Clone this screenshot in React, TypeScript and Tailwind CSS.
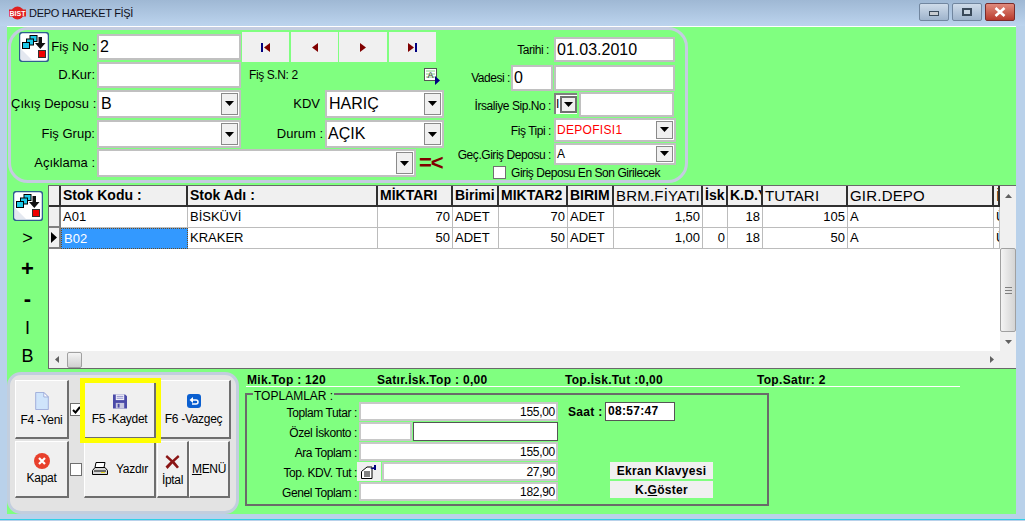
import type { ReactNode } from 'react';

// Delphi style "DEPO HAREKET FİŞİ" window

const Arrow = () => (
  <svg width="9" height="5" viewBox="0 0 9 5"><path d="M0 0h9L4.5 5z" fill="#000" /></svg>
);

const Field = ({ className = '', children }: { className?: string; children?: ReactNode }) => (
  <div className={`flex items-center overflow-hidden whitespace-nowrap bg-white border-2 border-[#c0c0c0] ${className}`}>
    {children}
  </div>
);

const Combo = ({ className = '', text, textClass = '' }: { className?: string; text?: string; textClass?: string }) => (
  <div className={`flex items-stretch bg-white border-2 border-[#c0c0c0] ${className}`}>
    <span className={`flex-1 overflow-hidden whitespace-nowrap self-center ${textClass}`}>{text}</span>
    <span className="m-[1px] w-[17px] flex items-center justify-center bg-[#f0f0f0] border border-[#8a8a8a]">
      <Arrow />
    </span>
  </div>
);

const LinkIcon = () => (
  <svg width="30" height="30" viewBox="0 0 30 30" className="shrink-0">
    <rect x="0.5" y="0.5" width="29" height="29" rx="3" fill="#fff" stroke="#2f5f8f" strokeWidth="1.5" />
    <path d="M2 28 L2 17 L13 28z" fill="#e4e8f0" />
    <rect x="11" y="3.5" width="7" height="6" fill="#1ec8e8" stroke="#000" />
    <rect x="7.5" y="7" width="7" height="6" fill="#1ec8e8" stroke="#000" />
    <rect x="3.5" y="10.5" width="7" height="6" fill="#1ec8e8" stroke="#000" />
    <path d="M19.5 5h3.5v6h3.5l-5.2 6-5.3-6h3.5z" fill="#111" />
    <rect x="19.5" y="18.5" width="7" height="7" fill="#f00000" stroke="#333" />
  </svg>
);

const NavBtn = ({ children, className = '' }: { children: ReactNode; className?: string }) => (
  <div className={`h-[30px] flex items-center justify-center bg-[#f0f0f0] ${className}`}>{children}</div>
);

const headers = [
  { t: 'Stok Kodu :', w: 'w-[127px]', b: true },
  { t: 'Stok Adı :', w: 'w-[190px]', b: true },
  { t: 'MİKTARI', w: 'w-[75px]', b: true },
  { t: 'Birimi', w: 'w-[46px]', b: true },
  { t: 'MIKTAR2', w: 'w-[69px]', b: true },
  { t: 'BIRIM', w: 'w-[46px]', b: true },
  { t: 'BRM.FİYATI', w: 'w-[89px]', b: false },
  { t: 'İsk', w: 'w-[25px]', b: true },
  { t: 'K.D.Y', w: 'w-[35px]', b: true },
  { t: 'TUTARI', w: 'w-[85px]', b: false },
  { t: 'GIR.DEPO', w: 'w-[146px]', b: false },
  { t: 'İ', w: 'w-[6px]', b: false },
];

const rows = [
  ['A01', 'BİSKÜVİ', '70', 'ADET', '70', 'ADET', '1,50', '', '18', '105', 'A', 'Ü'],
  ['B02', 'KRAKER', '50', 'ADET', '50', 'ADET', '1,00', '0', '18', '50', 'A', 'Ü'],
];

const rightCols = [2, 4, 6, 7, 8, 9];

const ActionBtn = ({ children, className = '' }: { children: ReactNode; className?: string }) => (
  <div className={`h-full bg-[#f0f0f0] border-t border-l border-t-white border-l-white border-r-2 border-b-2 border-r-[#6e6e6e] border-b-[#6e6e6e] flex flex-col items-center justify-center text-[12px] tracking-[-0.3px] text-black whitespace-nowrap ${className}`}>
    {children}
  </div>
);

const TotalRow = ({ label, children }: { label: string; children: ReactNode }) => (
  <div className="flex items-center h-[19px]">
    <span className="w-[112px] text-right text-[12px] tracking-[-0.4px] pr-[2px] pt-[2px] whitespace-nowrap">{label}</span>
    {children}
  </div>
);

const Amount = ({ v, className = '' }: { v: string; className?: string }) => (
  <Field className={`h-[19px] justify-end pr-[1px] text-[12px] tracking-[-0.3px] border-[#c8c8c8] ${className}`}>{v}</Field>
);

export default function App() {
  return (
    <div className="w-[1025px] h-[521px] overflow-hidden flex flex-col bg-[#b9d1ea] text-black font-['Liberation_Sans',Arial,sans-serif]">
      {/* title bar */}
      <div className="h-[26px] shrink-0 flex items-center pl-[9px] bg-gradient-to-b from-[#9fb8d4] to-[#bcd4ee]">
        <svg width="17" height="14" viewBox="0 0 17 14" className="mr-[3px]">
          <ellipse cx="8.5" cy="7" rx="6.5" ry="6.5" fill="#e02020" />
          <rect x="0" y="3.5" width="17" height="7" fill="#e02020" />
          <text x="8.5" y="9.5" textAnchor="middle" fontSize="7" fontWeight="700" fill="#fff" fontFamily="Liberation Sans">BIST</text>
        </svg>
        <span className="text-[11px] tracking-[-0.3px] text-[#101020]">DEPO HAREKET FİŞİ</span>
        <div className="ml-auto mr-[10px] flex gap-[3px] -mt-[2px]">
          <div className="w-[30px] h-[18px] rounded-[2px] border border-[#71869f] bg-gradient-to-b from-[#cfdcea] to-[#9fb4cc] flex items-center justify-center">
            <div className="w-[10px] h-[5px] mt-[3px] bg-[#c8ccd0] border border-[#3a4a5a]" />
          </div>
          <div className="w-[30px] h-[18px] rounded-[2px] border border-[#71869f] bg-gradient-to-b from-[#cfdcea] to-[#9fb4cc] flex items-center justify-center">
            <div className="w-[10px] h-[8px] border-2 border-[#3a4a5a] bg-[#c8d4e0]" />
          </div>
          <div className="w-[30px] h-[18px] rounded-[2px] border border-[#7a2c2c] bg-gradient-to-b from-[#e08a7c] to-[#b8382c] flex items-center justify-center">
            <svg width="12" height="10" viewBox="0 0 12 10"><path d="M1.5 1l9 8M10.5 1l-9 8" stroke="#fff" strokeWidth="2.6" /></svg>
          </div>
        </div>
      </div>

      <div className="ml-[7px] w-[1009px] h-[488px] shrink-0 bg-[#80ff80] border-t border-t-white flex flex-col">
        {/* header panel */}
        <div className="h-[158px] shrink-0 pl-[1px]">
          <div className="w-[680px] h-[156px] border-[3px] border-[#c4cce0] rounded-[20px] flex">
            {/* left block */}
            <div className="w-[439px] shrink-0 pt-[2px] text-[13px]">
              <div className="h-[30px] flex items-center">
                <div className="ml-[8px]"><LinkIcon /></div>
                <span className="w-[48px] text-right pr-[1px] whitespace-nowrap">Fiş No :</span>
                <Field className="w-[144px] h-[26px] pl-[1px] text-[16px]">2</Field>
                <div className="flex ml-[1px]">
                  <NavBtn className="w-[47px] mr-[2px]">
                    <svg width="9" height="9" viewBox="0 0 9 9"><rect width="2" height="9" fill="#000080" /><path d="M9 0v9L3 4.5z" fill="#800000" /></svg>
                  </NavBtn>
                  <NavBtn className="w-[47px] mr-[1px]">
                    <svg width="6" height="9" viewBox="0 0 6 9"><path d="M6 0v9L0 4.5z" fill="#800000" /></svg>
                  </NavBtn>
                  <NavBtn className="w-[48px] mr-[2px]">
                    <svg width="6" height="9" viewBox="0 0 6 9"><path d="M0 0v9l6-4.5z" fill="#800000" /></svg>
                  </NavBtn>
                  <NavBtn className="w-[47px]">
                    <svg width="9" height="9" viewBox="0 0 9 9"><path d="M0 0v9l6-4.5z" fill="#800000" /><rect x="7" width="2" height="9" fill="#000080" /></svg>
                  </NavBtn>
                </div>
              </div>
              <div className="h-[26px] flex items-center">
                <span className="w-[86px] text-right pr-[2px] whitespace-nowrap">D.Kur:</span>
                <Field className="w-[144px] h-[26px]" />
                <span className="ml-[8px] text-[12px] tracking-[-0.4px] whitespace-nowrap">Fiş S.N: 2</span>
                <svg width="16" height="17" viewBox="0 0 16 17" className="ml-[126px] mt-[2px]">
                  <rect x="0.5" y="0.5" width="12" height="12" fill="#fff" stroke="#555" />
                  <path d="M2 3h9M2 6h9M2 9h9" stroke="#7fd07f" />
                  <text x="6.5" y="10" textAnchor="middle" fontSize="9" fill="#333" fontFamily="Liberation Sans">A</text>
                  <path d="M11 8l5 4.5-5 4.5z" fill="#000080" />
                </svg>
              </div>
              <div className="h-[29px] mt-[1px] flex items-center">
                <span className="w-[86px] text-right pr-[1px] whitespace-nowrap">Çıkış Deposu :</span>
                <Combo className="w-[144px] h-[28px]" text="B" textClass="pl-[2px] text-[16px]" />
                <span className="w-[84px] text-right pr-[5px]">KDV</span>
                <Combo className="w-[119px] h-[28px]" text="HARIÇ" textClass="pl-[2px] text-[16px]" />
              </div>
              <div className="h-[28px] mt-[2px] flex items-center">
                <span className="w-[86px] text-right pr-[2px] whitespace-nowrap">Fiş Grup:</span>
                <Combo className="w-[144px] h-[28px]" />
                <span className="w-[84px] text-right pr-[2px]">Durum :</span>
                <Combo className="w-[119px] h-[28px]" text="AÇIK" textClass="pl-[1px] text-[16px]" />
              </div>
              <div className="h-[28px] mt-[1px] flex items-center">
                <span className="w-[86px] text-right pr-[2px] whitespace-nowrap">Açıklama :</span>
                <Combo className="w-[319px] h-[28px]" />
                <span className="ml-[3px] text-[22px] leading-[22px] font-bold text-[#800000] tracking-[-1px]">=&lt;</span>
              </div>
            </div>

            {/* right block */}
            <div className="pt-[7px] text-[12px] tracking-[-0.45px]">
              <div className="h-[25px] flex items-center">
                <span className="w-[104px] text-right pr-[5px] whitespace-nowrap">Tarihi :</span>
                <Field className="w-[121px] h-[25px] pl-[1px] text-[16px] tracking-normal">01.03.2010</Field>
              </div>
              <div className="h-[26px] mt-[3px] flex items-center">
                <span className="w-[61px] text-right pr-[1px] whitespace-nowrap">Vadesi :</span>
                <Field className="w-[42px] h-[26px] pl-[1px] text-[16px] tracking-normal">0</Field>
                <Field className="ml-[1px] w-[121px] h-[26px]" />
              </div>
              <div className="h-[25px] mt-[1px] flex items-start">
                <span className="w-[104px] h-[25px] flex items-center justify-end pr-[3px] pt-[3px] whitespace-nowrap">İrsaliye Sip.No :</span>
                <div className="w-[23px] h-[21px] mt-[1px] bg-white flex items-center justify-between overflow-hidden border-t-2 border-l-2 border-[#808080]">
                  <span className="text-[12px] leading-[17px] w-[4px] overflow-hidden">I</span>
                  <span className="w-[17px] h-[17px] flex items-center justify-center bg-[#f0f0f0] border-2 border-[#707070]">
                    <Arrow />
                  </span>
                </div>
                <Field className="ml-[2px] w-[95px] h-[25px]" />
              </div>
              <div className="h-[23px] mt-[1px] flex items-center">
                <span className="w-[104px] text-right pr-[3px] pt-[2px] whitespace-nowrap">Fiş Tipi :</span>
                <Combo className="w-[122px] h-[24px]" text="DEPOFISI1" textClass="pl-[1px] text-[12px] tracking-[0.3px] text-[#ff0000]" />
              </div>
              <div className="h-[21px] mt-[2px] flex items-center">
                <span className="w-[104px] text-right pr-[3px] pt-[2px] whitespace-nowrap">Geç.Giriş Deposu :</span>
                <Combo className="w-[122px] h-[22px]" text="A" textClass="pl-[1px] text-[12px] tracking-normal" />
              </div>
              <div className="h-[13px] mt-[2px] flex items-center pl-[43px]">
                <span className="w-[13px] h-[13px] bg-white border border-[#707070]" />
                <span className="ml-[5px] whitespace-nowrap">Giriş Deposu En Son Girilecek</span>
              </div>
            </div>
          </div>
        </div>

        {/* grid row */}
        <div className="h-[184px] shrink-0 flex">
          <div className="w-[41px] shrink-0 flex flex-col items-center">
            <div className="mt-[6px] mb-[3px]"><LinkIcon /></div>
            <span className="h-[30px] flex items-center text-[18px]">&gt;</span>
            <span className="h-[30px] flex items-center text-[22px] font-bold">+</span>
            <span className="h-[30px] flex items-center text-[22px] font-bold">-</span>
            <span className="h-[30px] flex items-center text-[18px]">I</span>
            <span className="h-[26px] flex items-center text-[18px]">B</span>
          </div>
          <div className="w-[968px] h-[184px] flex border-t border-l border-b border-[#696969] bg-white">
            <div className="w-[951px] flex flex-col">
              <div className="h-[21px] flex bg-[#f0f0f0] border-b-2 border-[#303030]">
                <div className="w-[12px] border-r-2 border-[#303030]" />
                {headers.map((h) => (
                  <div key={h.t} className={`${h.w} ${h.b ? 'text-[14px] font-bold' : 'text-[15px] tracking-[0.2px]'} pl-[2px] border-r-2 border-[#303030] overflow-hidden whitespace-nowrap leading-[19px]`}>
                    {h.t}
                  </div>
                ))}
              </div>
              {rows.map((row, r) => (
                <div key={row[0]} className="h-[21px] flex text-[13px]">
                  <div className="w-[12px] bg-[#f0f0f0] border-r-2 border-b-2 border-[#808080] flex items-center justify-center">
                    {r === 1 && <svg width="6" height="11" viewBox="0 0 6 11"><path d="M0 0v11l6-5.5z" fill="#000" /></svg>}
                  </div>
                  {row.map((cell, c) => (
                    <div
                      key={c}
                      className={`${headers[c].w} px-[2px] flex items-center overflow-hidden whitespace-nowrap ${
                        rightCols.includes(c) ? 'justify-end' : ''
                      } ${
                        r === 1 && c === 0
                          ? 'bg-[#3399ff] text-white border border-dotted border-[#6a4a20]'
                          : 'border-r border-b border-[#bcbcbc]'
                      }`}
                    >
                      {cell}
                    </div>
                  ))}
                </div>
              ))}
              <div className="flex-1" />
              {/* horizontal scrollbar */}
              <div className="h-[17px] shrink-0 flex items-center bg-[#f0f0f0]">
                <svg width="4" height="7" viewBox="0 0 4 7" className="ml-[6px]"><path d="M4 0v7L0 3.5z" fill="#606060" /></svg>
                <div className="ml-[8px] w-[15px] h-[16px] rounded-[2px] border border-[#a0a0a0] bg-gradient-to-b from-[#f4f4f4] to-[#d0d0d0]" />
                <svg width="4" height="7" viewBox="0 0 4 7" className="ml-auto mr-[6px]"><path d="M0 0v7l4-3.5z" fill="#606060" /></svg>
              </div>
            </div>
            {/* vertical scrollbar */}
            <div className="w-[16px] flex flex-col bg-[#f0f0f0]">
              <div className="h-[20px] flex items-center justify-center">
                <svg width="7" height="4" viewBox="0 0 7 4"><path d="M0 4h7L3.5 0z" fill="#606060" /></svg>
              </div>
              <div className="h-[42px]" />
              <div className="h-[84px] rounded-[2px] border border-[#a0a0a0] bg-gradient-to-r from-[#f4f4f4] to-[#d4d4d4] flex items-center justify-center">
                <div className="w-[7px] h-[7px] border-t border-b border-[#808080] flex items-center"><div className="w-full h-px bg-[#808080]" /></div>
              </div>
              <div className="h-[20px] flex items-center justify-center">
                <svg width="7" height="4" viewBox="0 0 7 4"><path d="M0 0h7L3.5 4z" fill="#606060" /></svg>
              </div>
            </div>
          </div>
        </div>

        {/* bottom */}
        <div className="flex-1 flex">
          <div className="w-[232px] h-[142px] mt-[3px] shrink-0 rounded-[14px] border-[3px] border-[#c2cede] bg-[#e3e3e3] pl-[5px] pt-[5px]">
            <div className="h-[59px] flex items-center">
              <ActionBtn className="w-[54px] pt-[3px]">
                <svg width="14" height="18" viewBox="0 0 15 20" className="mb-[1px]">
                  <path d="M.5.5h9l5 5v14H.5z" fill="#cfe4fb" stroke="#9aa8d8" />
                  <path d="M9.5.5v5h5z" fill="#fff" stroke="#9aa8d8" />
                </svg>
                F4 -Yeni
              </ActionBtn>
              <div className="w-[15px] flex pl-[1px]">
                <span className="w-[12px] h-[13px] bg-white border border-[#707070] flex items-center justify-center">
                  <svg width="9" height="8" viewBox="0 0 9 8"><path d="M1 4l2.5 2.5L8 1" fill="none" stroke="#000" strokeWidth="2" /></svg>
                </span>
              </div>
              <div className="relative w-[72px] h-full">
                <ActionBtn className="w-full pt-[3px]">
                  <svg width="14" height="15" viewBox="0 0 15 15" className="mb-[1px]">
                    <path d="M0 0h13l2 2v13H0z" fill="#4a4aa8" />
                    <rect x="3" y="0" width="9" height="6" fill="#f2f2fa" />
                    <path d="M4 2h7M4 4h7" stroke="#8a8ac8" />
                    <rect x="3" y="9" width="9" height="6" fill="#c8c8e0" />
                    <rect x="5" y="10" width="2" height="4" fill="#4a4aa8" />
                  </svg>
                  F5 -Kaydet
                </ActionBtn>
                <div className="absolute left-[-4px] top-[-2px] w-[81px] h-[65px] border-[5px] border-[#ffff00]" />
              </div>
              <ActionBtn className="ml-[1px] w-[74px] pt-[3px]">
                <svg width="14" height="14" viewBox="0 0 14 14" className="mb-[2px]">
                  <rect width="14" height="14" rx="3" fill="#0a5fd0" />
                  <path d="M4 6h5a2 2 0 0 1 0 4H5" fill="none" stroke="#fff" strokeWidth="1.5" />
                  <path d="M6 3v6L2.5 6z" fill="#fff" />
                </svg>
                F6 -Vazgeç
              </ActionBtn>
            </div>
            <div className="h-[57px] mt-[2px] flex items-center">
              <ActionBtn className="w-[54px] pt-[2px]">
                <svg width="16" height="16" viewBox="0 0 16 16">
                  <circle cx="8" cy="8" r="8" fill="#e8402c" />
                  <path d="M5 5l6 6M11 5l-6 6" stroke="#fff" strokeWidth="2.2" />
                </svg>
                Kapat
              </ActionBtn>
              <div className="w-[15px] flex pl-[1px]">
                <span className="w-[12px] h-[13px] bg-white border border-[#707070]" />
              </div>
              <ActionBtn className="w-[72px] !flex-row pl-[1px]">
                <svg width="16" height="15" viewBox="0 0 16 15" className="mr-[8px]">
                  <path d="M4 .5h9l-1 5H3z" fill="#fff" stroke="#000" />
                  <path d="M3 5.5h10l2.5 3v4H.5v-4z" fill="#d8d8d8" stroke="#000" />
                  <path d="M2 9h12" stroke="#000" />
                  <rect x="9" y="10" width="4" height="1" fill="#e8d820" />
                </svg>
                Yazdır
              </ActionBtn>
              <ActionBtn className="ml-[1px] w-[32px] pt-[5px]">
                <svg width="15" height="15" viewBox="0 0 15 15">
                  <path d="M2 1l5.5 5L13 1l1.5 2L9.5 7.5 14 13l-2 1.5L7.5 9.5 2.5 15 .5 12.5 5.5 7.5.5 3z" fill="#8a1414" />
                </svg>
                <span className="mt-[2px]">İptal</span>
              </ActionBtn>
              <ActionBtn className="w-[41px]"><span><u>M</u>ENÜ</span></ActionBtn>
            </div>
          </div>

          <div className="ml-[6px] flex flex-col">
            <div className="h-[17px] flex items-center pl-[2px] pt-[4px] text-[12px] font-bold tracking-[0.3px] whitespace-nowrap">
              <span className="w-[130px]">Mik.Top : 120</span>
              <span className="w-[188px]">Satır.İsk.Top :  0,00</span>
              <span className="w-[192px]">Top.İsk.Tut :0,00</span>
              <span>Top.Satır: 2</span>
            </div>
            <div className="ml-[1px] w-[714px] h-px bg-white" />
            <fieldset className="-mt-[2px] w-[524px] h-[121px] border-2 border-[#6a6a6a] pl-0">
              <legend className="ml-[6px] px-[1px] pt-[5px] text-[12px] leading-[13px]">TOPLAMLAR :</legend>
              <div className="flex -mt-[1px]">
                <div className="flex flex-col gap-[1px]">
                  <TotalRow label="Toplam Tutar :"><Amount v="155,00" className="w-[199px]" /></TotalRow>
                  <TotalRow label="Özel İskonto :">
                    <Field className="w-[53px] h-[19px] border-[#c8c8c8]" />
                    <div className="ml-[1px] w-[145px] h-[19px] bg-white border border-[#555555]" />
                  </TotalRow>
                  <TotalRow label="Ara Toplam :"><Amount v="155,00" className="w-[199px]" /></TotalRow>
                  <TotalRow label="Top. KDV. Tut :">
                    <div className="-ml-[2px] w-[24px] h-[19px] bg-[#f0f0f0] flex items-center justify-center">
                      <svg width="16" height="14" viewBox="0 0 16 14">
                        <path d="M.5 6.5L6 2h5v11.5H.5z" fill="#fff" stroke="#000" />
                        <path d="M3 7h6M3 9h6M3 11h6" stroke="#000" />
                        <path d="M9 4l4-2V0h2v5h-2V4z" fill="#000080" />
                      </svg>
                    </div>
                    <Amount v="27,90" className="ml-[1px] w-[176px]" />
                  </TotalRow>
                  <TotalRow label="Genel Toplam :"><Amount v="182,90" className="w-[199px]" /></TotalRow>
                </div>
                <div className="ml-[10px] flex flex-col">
                  <div className="flex items-center h-[19px] text-[12px] font-bold tracking-[0.3px]">
                    <span className="w-[37px] whitespace-nowrap">Saat :</span>
                    <div className="w-[70px] h-[19px] bg-white border border-[#555555] pl-[2px] leading-[16px]">08:57:47</div>
                  </div>
                  <div className="ml-[42px] mt-[41px] w-[103px] flex flex-col gap-[2px] text-[12px] font-bold tracking-[0.3px]">
                    <div className="h-[17px] bg-[#f0f0f0] flex items-center justify-center">Ekran Klavyesi</div>
                    <div className="h-[17px] bg-[#f0f0f0] flex items-center justify-center"><span>K.<u>G</u>öster</span></div>
                  </div>
                </div>
              </div>
            </fieldset>
          </div>
        </div>
      </div>

      <div className="h-[5px] shrink-0" />
      <div className="h-px shrink-0 bg-[#30d0e8]" />
    </div>
  );
}
